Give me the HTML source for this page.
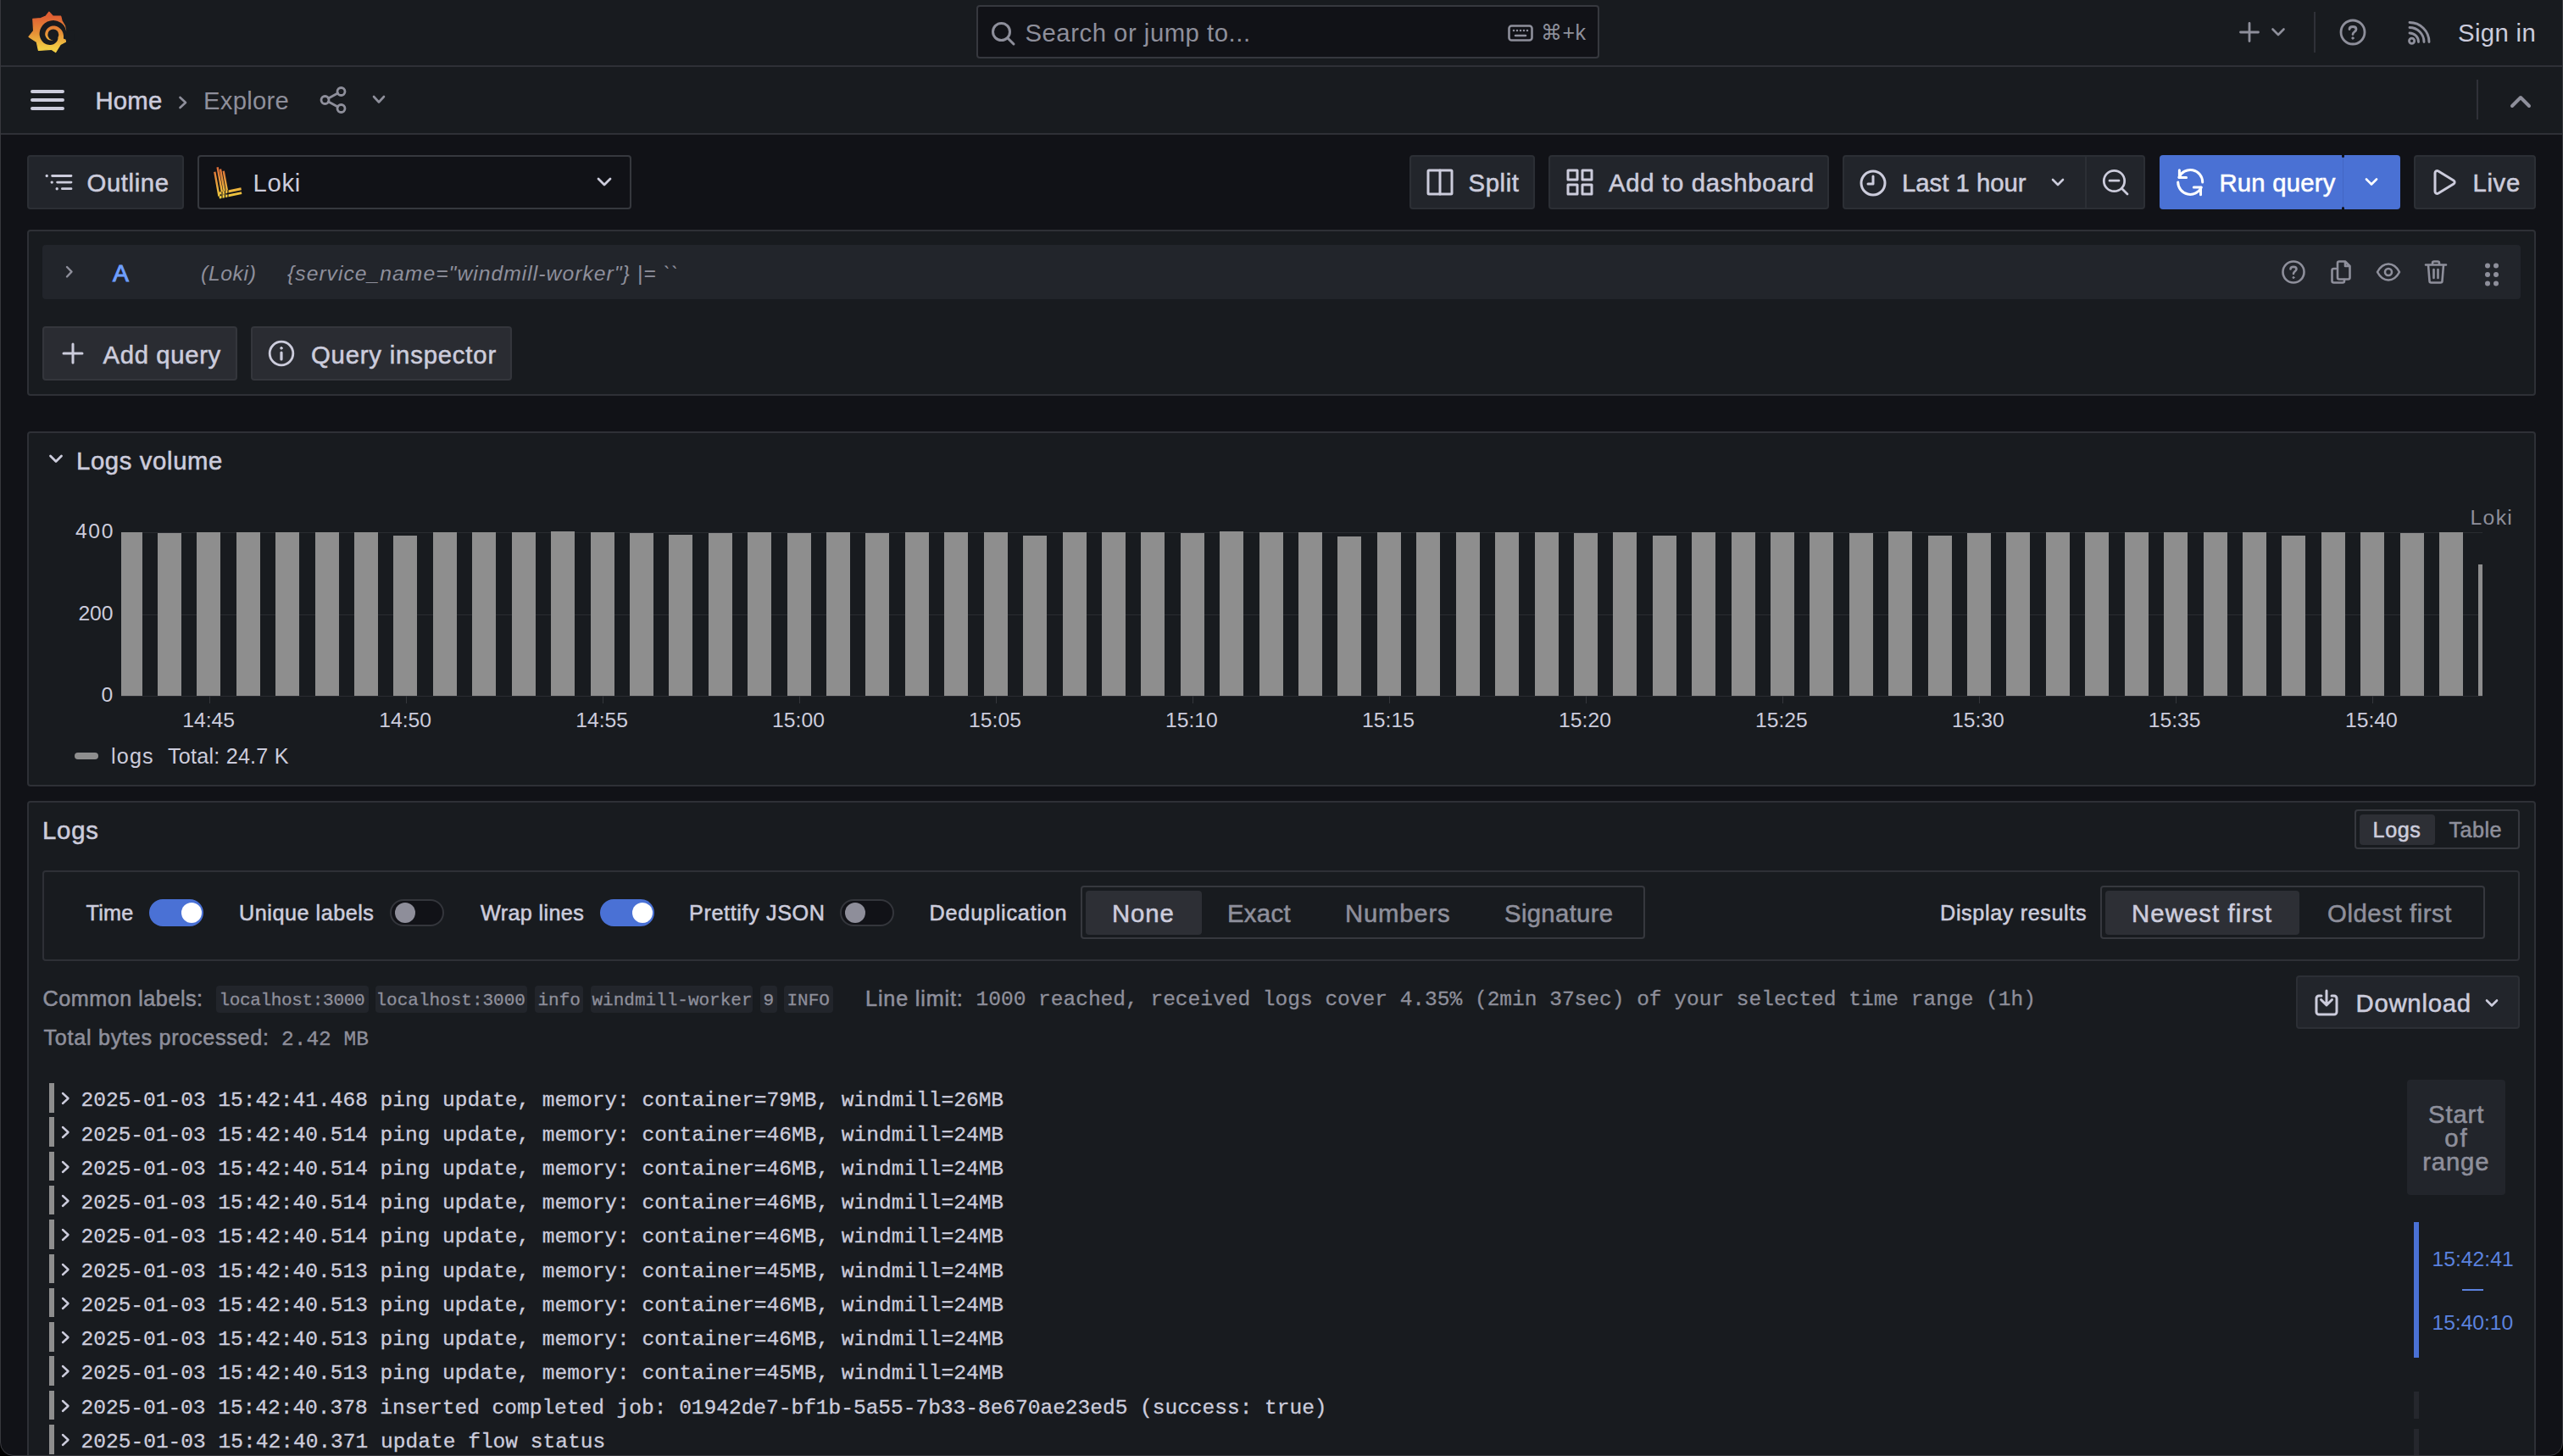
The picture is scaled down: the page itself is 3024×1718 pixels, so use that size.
<!DOCTYPE html>
<html><head><meta charset="utf-8">
<style>
*{box-sizing:border-box}
html,body{margin:0;padding:0}
body{width:3024px;height:1718px;overflow:hidden;background:#111217;position:relative;font-family:"Liberation Sans",sans-serif;color:#ccccdc}
.a{position:absolute}
.t{position:absolute;white-space:nowrap;line-height:1}
.md{-webkit-text-stroke:0.55px currentColor}
.m{font-family:"Liberation Mono",monospace;-webkit-text-stroke:0.3px currentColor}
.sec{color:#8e8f9b}
.bar{position:absolute;left:0;width:3024px;background:#181b1f;border-bottom:2px solid #2e3036}
.btn{position:absolute;background:#22252b;border:2px solid #2c2f35;border-radius:4px}
.ic{position:absolute;overflow:visible}
.ic *{fill:none;stroke-linecap:round;stroke-linejoin:round}
.panel{position:absolute;left:32px;width:2960px;background:#181b1f;border:2px solid #2e3036;border-radius:4px}
@media (max-width:2000px){html{zoom:0.5}}
</style></head><body>
<!-- window borders -->
<div class="a" style="left:0;top:-30px;width:3024px;height:1748px;border:1px solid #37383d;border-radius:16px;box-shadow:0 0 0 60px #000;z-index:50;pointer-events:none"></div>

<!-- ===== TOP BAR ===== -->
<div class="bar" style="top:0;height:79px"></div>
<!--LOGO-->
<svg class="ic" style="left:26px;top:8px" width="60" height="60" viewBox="0 0 60 60">
<defs><linearGradient id="lg" x1="0" y1="0.1" x2="0" y2="0.9"><stop offset="0" stop-color="#df5f33"/><stop offset="0.5" stop-color="#e68d36"/><stop offset="1" stop-color="#f2cd44"/></linearGradient></defs>
<path style="fill:url(#lg);stroke:url(#lg);stroke-width:1.2;stroke-linejoin:round" d="M31.9 6.2 L36.3 10.9 L45.7 11.1 L47 16.5 L50.5 22.5 L51.7 28.8 L50.3 36 L51.5 41.2 L45.3 44.5 L39.6 53.6 L34.6 50.3 L19.4 51.5 L17.3 41.6 L8 35.4 L13.6 28.4 L12.8 14.4 L22.2 13.6 L28 11.1 Z"/>
<path style="fill:#181b1f;stroke:none" d="M49.04 37.84 L52.90 38.76 L56.84 39.41 L60.83 39.79 L61.06 38.95 L61.25 38.10 L61.42 37.24 L61.56 36.38 L61.66 35.51 L61.74 34.64 L61.78 33.77 L61.80 32.90 L61.78 32.03 L61.74 31.16 L61.66 30.29 L61.56 29.42 L61.42 28.56 L61.25 27.70 L56.59 27.96 L51.99 28.54 L51.88 28.00 L51.75 27.46 L51.60 26.92 L51.44 26.38 L51.25 25.85 L51.04 25.33 L50.82 24.81 L50.57 24.29 L50.31 23.79 L50.03 23.29 L49.73 22.80 L49.41 22.32 L49.07 21.85 L48.72 21.39 L48.33 20.96 L47.92 20.55 L47.48 20.17 L47.04 19.79 L46.58 19.44 L46.11 19.10 L45.63 18.77 L45.13 18.47 L44.63 18.18 L44.11 17.90 L43.59 17.65 L43.06 17.41 L42.52 17.20 L41.97 17.00 L41.41 16.82 L40.85 16.66 L40.28 16.52 L39.71 16.40 L39.13 16.30 L38.55 16.22 L37.97 16.16 L37.39 16.12 L36.80 16.10 L36.21 16.11 L35.63 16.15 L35.05 16.21 L34.46 16.28 L33.89 16.38 L33.31 16.49 L32.74 16.63 L32.18 16.78 L31.62 16.96 L31.07 17.15 L30.52 17.37 L29.99 17.60 L29.46 17.85 L28.94 18.12 L28.43 18.41 L27.94 18.71 L27.45 19.03 L26.97 19.37 L26.51 19.73 L26.06 20.10 L25.62 20.48 L25.20 20.89 L24.80 21.31 L24.41 21.75 L24.05 22.20 L23.70 22.67 L23.37 23.14 L23.06 23.63 L22.76 24.13 L22.48 24.63 L22.22 25.15 L21.98 25.67 L21.76 26.20 L21.55 26.74 L21.37 27.28 L21.20 27.83 L21.06 28.39 L20.93 28.94 L20.82 29.50 L20.74 30.07 L20.67 30.63 L20.62 31.20 L20.60 31.77 L20.59 32.33 L20.60 32.90 L20.68 33.46 L20.78 34.02 L20.90 34.57 L21.04 35.12 L21.20 35.65 L21.37 36.18 L21.56 36.70 L21.77 37.21 L22.00 37.71 L22.25 38.20 L22.50 38.68 L22.78 39.14 L23.07 39.60 L23.38 40.04 L23.69 40.47 L24.03 40.88 L24.37 41.28 L24.73 41.67 L25.10 42.04 L25.48 42.40 L25.87 42.74 L26.27 43.07 L26.71 43.35 L27.17 43.59 L27.64 43.81 L28.12 44.01 L28.59 44.19 L29.07 44.36 L29.55 44.50 L30.03 44.62 L30.51 44.72 L30.99 44.81 L31.47 44.87 L31.94 44.92 L32.41 44.95 L32.88 44.96 L33.34 44.95 L33.80 44.93 L34.25 44.89 L34.70 44.83 L35.13 44.75 L35.56 44.66 L35.98 44.56 L36.40 44.44 L36.80 44.30 L37.19 44.13 L37.57 43.94 L37.94 43.74 L38.29 43.53 L38.64 43.31 L38.96 43.08 L39.28 42.84 L39.58 42.58 L39.86 42.32 L40.13 42.06 L40.39 41.78 L40.63 41.50 L40.85 41.21 L41.06 40.92 L41.26 40.62 L41.44 40.32 L41.60 40.02 L41.75 39.71 L41.89 39.41 L42.01 39.10 L42.11 38.80 L42.20 38.50 L42.28 38.19 L42.34 37.89 L42.39 37.59 L42.43 37.30 L42.45 37.00 L42.45 36.71 L42.45 36.43 L42.43 36.15 L36.80 32.90 L37.11 33.09 L37.40 33.30 L37.67 33.53 L37.93 33.79 L38.18 34.06 L38.41 34.35 L38.61 34.65 L38.80 34.97 L38.97 35.31 L39.11 35.66 L39.24 36.02 L39.34 36.39 L39.34 36.67 L39.26 36.84 L39.17 37.01 L39.07 37.17 L38.96 37.34 L38.85 37.50 L38.72 37.66 L38.59 37.81 L38.45 37.97 L38.29 38.11 L38.14 38.26 L37.97 38.39 L37.79 38.53 L37.61 38.65 L37.42 38.78 L37.22 38.89 L37.01 39.00 L36.80 39.10 L36.58 39.19 L36.35 39.27 L36.12 39.34 L35.89 39.41 L35.64 39.47 L35.39 39.51 L35.14 39.55 L34.89 39.58 L34.62 39.60 L34.36 39.60 L34.09 39.60 L33.82 39.59 L33.55 39.56 L33.28 39.53 L33.00 39.48 L32.72 39.42 L32.45 39.36 L32.17 39.28 L31.89 39.18 L31.61 39.08 L31.34 38.96 L31.07 38.84 L30.81 38.69 L30.57 38.51 L30.33 38.33 L30.10 38.13 L29.87 37.93 L29.66 37.72 L29.44 37.50 L29.24 37.27 L29.04 37.03 L28.85 36.78 L28.66 36.52 L28.49 36.26 L28.32 35.99 L28.16 35.71 L28.02 35.42 L27.88 35.12 L27.75 34.82 L27.63 34.52 L27.52 34.20 L27.42 33.89 L27.34 33.56 L27.26 33.23 L27.20 32.90 L27.19 32.56 L27.20 32.23 L27.21 31.89 L27.24 31.56 L27.28 31.22 L27.33 30.89 L27.39 30.55 L27.47 30.22 L27.56 29.90 L27.65 29.57 L27.76 29.25 L27.88 28.93 L28.02 28.62 L28.16 28.31 L28.31 28.00 L28.48 27.70 L28.65 27.40 L28.84 27.12 L29.04 26.83 L29.24 26.56 L29.46 26.29 L29.68 26.03 L29.92 25.77 L30.15 25.52 L30.40 25.27 L30.66 25.04 L30.92 24.81 L31.20 24.59 L31.48 24.38 L31.77 24.18 L32.06 23.99 L32.37 23.81 L32.68 23.64 L33.00 23.48 L33.32 23.34 L33.65 23.20 L33.98 23.07 L34.32 22.96 L34.67 22.86 L35.01 22.77 L35.36 22.69 L35.72 22.62 L36.08 22.57 L36.44 22.53 L36.80 22.50 L37.16 22.49 L37.53 22.49 L37.89 22.50 L38.26 22.53 L38.62 22.57 L38.98 22.62 L39.35 22.69 L39.71 22.77 L40.06 22.86 L40.42 22.96 L40.77 23.08 L41.12 23.20 L41.46 23.34 L41.80 23.50 L42.13 23.66 L42.46 23.84 L42.78 24.03 L43.10 24.23 L43.41 24.44 L43.71 24.66 L44.01 24.89 L44.30 25.14 L44.59 25.38 L44.88 25.62 L45.17 25.88 L45.44 26.15 L45.71 26.42 L45.97 26.71 L46.23 27.01 L46.47 27.32 L46.70 27.64 L46.92 27.96 L47.13 28.30 L47.33 28.65 L47.52 29.00 L47.69 29.36 L47.85 29.73 L48.01 30.11 L48.15 30.49 L48.29 30.87 L48.42 31.27 L48.54 31.67 L48.64 32.07 L48.73 32.48 L48.80 32.90 L48.87 33.32 L48.92 33.75 L48.96 34.18 L48.98 34.61 L48.99 35.05 L48.98 35.49 L48.95 35.93 L48.91 36.37 L48.97 36.86 L49.02 37.35 L49.04 37.84 Z"/>
<circle cx="36.8" cy="32.9" r="6.5" style="fill:#181b1f;stroke:none"/>
</svg>

<!-- search -->
<div class="a" style="left:1152px;top:6px;width:735px;height:63px;background:#111217;border:2px solid #36383e;border-radius:4px"></div>
<svg class="ic" style="left:1168px;top:24px" width="32" height="32" viewBox="0 0 32 32"><circle cx="13.5" cy="13.5" r="10" style="stroke:#8e8f9b;stroke-width:3"/><path d="M21 21 L28 28" style="stroke:#8e8f9b;stroke-width:3"/></svg>
<span class="t sec" style="left:1209.5px;top:24.2px;font-size:29.3px;letter-spacing:0.52px">Search or jump to...</span>
<svg class="ic" style="left:1779px;top:29px" width="30" height="20" viewBox="0 0 30 20"><rect x="1.5" y="1.5" width="27" height="17" rx="3" style="stroke:#8e8f9b;stroke-width:2.6"/><path d="M7 7h0M11 7h0M15 7h0M19 7h0M23 7h0M9 13h12" style="stroke:#8e8f9b;stroke-width:2.6"/></svg>
<span class="t sec" style="left:1817.9px;top:25.9px;font-size:25px;letter-spacing:0.52px">⌘+k</span>

<svg class="ic" style="left:2640px;top:24px" width="28" height="28" viewBox="0 0 28 28"><path d="M14 3.5v21.1M3.5 14h21" style="stroke:#8e8f9b;stroke-width:2.8"/></svg>
<svg class="ic" style="left:2679px;top:32px" width="18" height="12" viewBox="0 0 18 12"><path d="M2.5 2.5 L9 9 L15.5 2.5" style="stroke:#8e8f9b;stroke-width:2.6"/></svg>
<div class="a" style="left:2730px;top:14px;width:2px;height:48px;background:#2f3138"></div>
<svg class="ic" style="left:2759px;top:21px" width="34" height="34" viewBox="0 0 34 34"><circle cx="17" cy="17" r="14" style="stroke:#8e8f9b;stroke-width:2.8"/><path d="M13 13.5 C13 9.5 21 9.5 21 13.5 C21 16.5 17 16.5 17 19.5" style="stroke:#8e8f9b;stroke-width:2.8"/><circle cx="17" cy="24" r="1.2" style="fill:#8e8f9b;stroke:#8e8f9b;stroke-width:1"/></svg>
<svg class="ic" style="left:2833px;top:20px" width="40" height="40" viewBox="0 0 40 40"><circle cx="12.6" cy="28.3" r="3.1" style="stroke:#8e8f9b;stroke-width:2.8"/><path d="M10 19 A10.5 10.5 0 0 1 20.5 29.5 M10 12.5 A17 17 0 0 1 27 29.5 M10 6.5 A23 23 0 0 1 33 29.5" style="stroke:#8e8f9b;stroke-width:2.9"/></svg>
<span class="t" style="left:2900.0px;top:24.2px;font-size:29.3px;letter-spacing:0.35px">Sign in</span>

<!-- ===== SECOND BAR ===== -->
<div class="bar" style="top:79px;height:80px"></div>
<svg class="ic" style="left:34px;top:104px" width="44" height="28" viewBox="0 0 44 28"><path d="M4 4h36M4 14h36M4 24h36" style="stroke:#ccccdc;stroke-width:4"/></svg>
<span class="t md" style="left:112.4px;top:104.0px;font-size:29.3px;letter-spacing:0.23px">Home</span>
<svg class="ic" style="left:209px;top:112px" width="14" height="18" viewBox="0 0 14 18"><path d="M3.5 3 L10 9 L3.5 15" style="stroke:#8e8f9b;stroke-width:2.6"/></svg>
<span class="t sec" style="left:239.9px;top:104.0px;font-size:29.3px;letter-spacing:0.28px">Explore</span>
<svg class="ic" style="left:376px;top:101px" width="34" height="34" viewBox="0 0 34 34"><circle cx="7.5" cy="17" r="4.5" style="stroke:#8e8f9b;stroke-width:2.8"/><circle cx="26.5" cy="7" r="4.5" style="stroke:#8e8f9b;stroke-width:2.8"/><circle cx="26.5" cy="27" r="4.5" style="stroke:#8e8f9b;stroke-width:2.8"/><path d="M11.5 15 L22.5 9 M11.5 19 L22.5 25" style="stroke:#8e8f9b;stroke-width:2.8"/></svg>
<svg class="ic" style="left:438px;top:111px" width="18" height="14" viewBox="0 0 18 14"><path d="M3 3 L9 9.5 L15 3" style="stroke:#8e8f9b;stroke-width:2.6"/></svg>
<div class="a" style="left:2922px;top:94px;width:2px;height:47px;background:#2f3138"></div>
<svg class="ic" style="left:2960px;top:110px" width="28" height="20" viewBox="0 0 28 20"><path d="M4 15 L14 5 L24 15" style="stroke:#8e8f9b;stroke-width:4"/></svg>

<!--TOOLBAR-->
<div class="btn" style="left:32px;top:183px;width:185px;height:64px"></div>
<svg class="ic" style="left:52px;top:203px" width="34" height="24" viewBox="0 0 34 24"><path d="M3.2 4.5h0M9.2 12.1h0M15.2 19.7h0" style="stroke:#ccccdc;stroke-width:3.4"/><path d="M9.6 4.5h22.4M15.6 12.1h16.4M21.4 19.7h10.6" style="stroke:#ccccdc;stroke-width:2.8"/></svg>
<span class="t md" style="left:102.5px;top:201.1px;font-size:29.3px;letter-spacing:0.60px">Outline</span>

<div class="a" style="left:233px;top:183px;width:512px;height:64px;background:#111217;border:2px solid #36383e;border-radius:4px"></div>
<svg class="ic" style="left:250px;top:194px" width="40" height="44" viewBox="0 0 40 44"><defs><linearGradient id="lk" gradientUnits="userSpaceOnUse" x1="0" y1="3" x2="0" y2="40"><stop offset="0" stop-color="#dd6a38"/><stop offset="0.55" stop-color="#e8a23c"/><stop offset="1" stop-color="#f0cf40"/></linearGradient></defs>
<path d="M3.3 8.8 L8.5 37.5 M6.6 3.3 L12.8 37.5 M10.0 5.5 L15.8 37.5 M13.7 7.7 L18.1 32.0 " style="stroke:url(#lk);stroke-width:2.4;stroke-linecap:butt"/>
<path d="M8.2 34.3 L34.6 28.8 M8.7 39 L35.1 33.6" style="stroke:url(#lk);stroke-width:3;stroke-linecap:butt"/>
<path d="M12 32v9M15.5 31v9M19 30v9" style="stroke:#111217;stroke-width:1;stroke-linecap:butt"/></svg>
<span class="t" style="left:298.5px;top:201.0px;font-size:29.3px;letter-spacing:0.65px">Loki</span>
<svg class="ic" style="left:703px;top:208px" width="20" height="14" viewBox="0 0 20 14"><path d="M3 3 L10 10 L17 3" style="stroke:#ccccdc;stroke-width:2.8"/></svg>

<div class="btn" style="left:1663px;top:183px;width:148px;height:64px"></div>
<svg class="ic" style="left:1682px;top:198px" width="34" height="34" viewBox="0 0 34 34"><rect x="3" y="3" width="28" height="28" rx="1" style="stroke:#ccccdc;stroke-width:3"/><path d="M17 3v28" style="stroke:#ccccdc;stroke-width:3"/></svg>
<span class="t md" style="left:1732.5px;top:201.1px;font-size:29.3px;letter-spacing:0.61px">Split</span>

<div class="btn" style="left:1827px;top:183px;width:331px;height:64px"></div>
<svg class="ic" style="left:1847px;top:198px" width="34" height="34" viewBox="0 0 34 34"><rect x="3" y="3" width="11" height="11" style="stroke:#ccccdc;stroke-width:3"/><rect x="20" y="3" width="11" height="11" style="stroke:#ccccdc;stroke-width:3"/><rect x="3" y="20" width="11" height="11" style="stroke:#ccccdc;stroke-width:3"/><rect x="20" y="20" width="11" height="11" style="stroke:#ccccdc;stroke-width:3"/></svg>
<span class="t md" style="left:1898.0px;top:201.1px;font-size:29.3px;letter-spacing:0.71px">Add to dashboard</span>

<div class="btn" style="left:2174px;top:183px;width:357px;height:64px"></div>
<div class="a" style="left:2460px;top:185px;width:2px;height:60px;background:#2c2f35"></div>
<svg class="ic" style="left:2193px;top:199px" width="34" height="34" viewBox="0 0 34 34"><circle cx="17" cy="17" r="14" style="stroke:#ccccdc;stroke-width:3"/><path d="M17 9v9h-6" style="stroke:#ccccdc;stroke-width:3"/></svg>
<span class="t md" style="left:2244.0px;top:201.2px;font-size:29.3px;letter-spacing:0.00px">Last 1 hour</span>
<svg class="ic" style="left:2418px;top:208px" width="20" height="14" viewBox="0 0 20 14"><path d="M4 4 L10 10 L16 4" style="stroke:#ccccdc;stroke-width:2.6"/></svg>
<svg class="ic" style="left:2479px;top:198px" width="36" height="36" viewBox="0 0 36 36"><circle cx="15.5" cy="15.5" r="12.2" style="stroke:#ccccdc;stroke-width:2.8"/><path d="M10 15.2h11M24.5 24.5l6.5 6.5" style="stroke:#ccccdc;stroke-width:2.8"/></svg>

<div class="a" style="left:2548px;top:183px;width:284px;height:64px;background:#4a71d4;border-radius:4px"></div>
<div class="a" style="left:2764px;top:185px;width:1px;height:60px;background:#4266c4"></div><div class="a" style="left:2763px;top:183px;width:3px;height:3px;background:#111217;border-radius:0 0 2px 2px"></div><div class="a" style="left:2763px;top:244px;width:3px;height:3px;background:#111217;border-radius:2px 2px 0 0"></div>
<svg class="ic" style="left:2566px;top:197px" width="36" height="36" viewBox="0 0 36 36"><path d="M4.85 12.33 A14.5 14.5 0 0 1 32.7 18 M3.7 18 A14.5 14.5 0 0 0 31.3 24.1" style="stroke:#ffffff;stroke-width:3"/><path d="M5.4 3.7 V12.5 H13.6 M30.5 32.7 V24 H22.3" style="stroke:#ffffff;stroke-width:3"/></svg>
<span class="t md" style="left:2618.5px;top:200.9px;font-size:29.3px;color:#fff;letter-spacing:0.21px">Run query</span>
<svg class="ic" style="left:2788px;top:207px" width="20" height="15" viewBox="0 0 20 15"><path d="M4 4.5 L10 10.5 L16 4.5" style="stroke:#ffffff;stroke-width:2.6"/></svg>

<div class="btn" style="left:2848px;top:183px;width:144px;height:64px"></div>
<svg class="ic" style="left:2869px;top:199px" width="30" height="32" viewBox="0 0 30 32"><path d="M4 5 C4 3 6 2 8 3 L26 14 C27.5 15 27.5 17 26 18 L8 29 C6 30 4 29 4 27 Z" style="stroke:#ccccdc;stroke-width:3"/></svg>
<span class="t md" style="left:2917.5px;top:201.3px;font-size:29.3px;letter-spacing:0.66px">Live</span>

<!--QUERY-->
<div class="panel" style="top:271px;height:196px"></div>
<div class="a" style="left:50px;top:289px;width:2924px;height:64px;background:#22252b;border-radius:4px"></div>
<svg class="ic" style="left:74px;top:311px" width="14" height="20" viewBox="0 0 14 20"><path d="M5 4 L10.5 9.7 L5 15.5" style="stroke:#8e8f9b;stroke-width:2.4"/></svg>
<span class="t md" style="left:133.0px;top:307.6px;font-size:28.4px;color:#6e9fff;-webkit-text-stroke:1px #6e9fff">A</span>
<span class="t sec" style="left:237.1px;top:310.5px;font-size:24.7px;font-style:italic;letter-spacing:0.61px">(Loki)</span>
<span class="t sec" style="left:339.0px;top:310.5px;font-size:24.7px;font-style:italic;letter-spacing:1.02px">{service_name="windmill-worker"} |= ``</span>
<svg class="ic" style="left:2690px;top:305px" width="32" height="32" viewBox="0 0 32 32"><circle cx="16" cy="16" r="12.5" style="stroke:#8e8f9b;stroke-width:2.6"/><path d="M12.5 12.5 C12.5 9 19.5 9 19.5 12.5 C19.5 15 16 15 16 18" style="stroke:#8e8f9b;stroke-width:2.6"/><circle cx="16" cy="22.5" r="1" style="fill:#8e8f9b;stroke:#8e8f9b;stroke-width:1"/></svg>
<svg class="ic" style="left:2746px;top:305px" width="32" height="32" viewBox="0 0 32 32"><path d="M20 25 v1.5 a2 2 0 0 1 -2 2 H7.5 a2 2 0 0 1 -2 -2 V14 a2 2 0 0 1 2 -2 H10" style="stroke:#8e8f9b;stroke-width:2.6"/><path d="M12 5.5 a2 2 0 0 1 2 -2 h7 l5.5 5.5 v13.5 a2 2 0 0 1 -2 2 H14 a2 2 0 0 1 -2 -2 Z M21 3.5 v5.5 h5.5" style="stroke:#8e8f9b;stroke-width:2.6"/></svg>
<svg class="ic" style="left:2802px;top:305px" width="32" height="32" viewBox="0 0 32 32"><path d="M3 16 C7 8.5 11 6.5 16 6.5 C21 6.5 25 8.5 29 16 C25 23.5 21 25.5 16 25.5 C11 25.5 7 23.5 3 16 Z" style="stroke:#8e8f9b;stroke-width:2.6"/><circle cx="16" cy="16" r="4" style="stroke:#8e8f9b;stroke-width:2.6"/></svg>
<svg class="ic" style="left:2858px;top:305px" width="32" height="32" viewBox="0 0 32 32"><path d="M4 7.5h24M12 7.5V5.5a2 2 0 0 1 2-2h4a2 2 0 0 1 2 2v2M7 7.5 L8.5 26.5 a2 2 0 0 0 2 2h11a2 2 0 0 0 2-2 L25 7.5M13.5 13v10M18.5 13v10" style="stroke:#8e8f9b;stroke-width:2.6"/></svg>
<svg class="ic" style="left:2928px;top:306px" width="24" height="34" viewBox="0 0 24 34"><circle cx="7" cy="7.5" r="3" style="fill:#8e8f9b;stroke:none"/><circle cx="17" cy="7.5" r="3" style="fill:#8e8f9b;stroke:none"/><circle cx="7" cy="18" r="3" style="fill:#8e8f9b;stroke:none"/><circle cx="17" cy="18" r="3" style="fill:#8e8f9b;stroke:none"/><circle cx="7" cy="28.5" r="3" style="fill:#8e8f9b;stroke:none"/><circle cx="17" cy="28.5" r="3" style="fill:#8e8f9b;stroke:none"/></svg>

<div class="btn" style="left:50px;top:385px;width:230px;height:64px;background:#2a2c32;border-color:#34363c"></div>
<svg class="ic" style="left:72px;top:403px" width="28" height="28" viewBox="0 0 28 28"><path d="M14 3v22M3 14h22" style="stroke:#ccccdc;stroke-width:3"/></svg>
<span class="t md" style="left:121.5px;top:403.6px;font-size:29.3px;letter-spacing:0.65px">Add query</span>
<div class="btn" style="left:296px;top:385px;width:308px;height:64px;background:#2a2c32;border-color:#34363c"></div>
<svg class="ic" style="left:316px;top:401px" width="32" height="32" viewBox="0 0 32 32"><circle cx="16" cy="16" r="13.8" style="stroke:#ccccdc;stroke-width:2.8"/><path d="M16 15v8" style="stroke:#ccccdc;stroke-width:3.2"/><circle cx="16" cy="9.8" r="1.3" style="fill:#ccccdc;stroke:#ccccdc;stroke-width:1"/></svg>
<span class="t md" style="left:367.0px;top:403.6px;font-size:29.3px;letter-spacing:0.81px">Query inspector</span>

<!--VOLUME-->
<div class="panel" style="top:509px;height:419px"></div>
<svg class="ic" style="left:56px;top:534px" width="20" height="16" viewBox="0 0 20 16"><path d="M3.5 4 L10 10.5 L16.5 4" style="stroke:#ccccdc;stroke-width:2.8"/></svg>
<span class="t md" style="left:90.0px;top:529.0px;font-size:29.3px;letter-spacing:0.63px">Logs volume</span>
<div class="a" style="left:143px;top:628px;width:2786px;height:1px;background:#2a2c31"></div>
<div class="a" style="left:143px;top:725px;width:2786px;height:1px;background:#2a2c31"></div>
<div class="a" style="left:143px;top:821px;width:2786px;height:1px;background:#2a2c31"></div>
<div class="a" style="left:246.8px;top:821px;width:1px;height:9px;background:#34363b"></div><div class="a" style="left:478.8px;top:821px;width:1px;height:9px;background:#34363b"></div><div class="a" style="left:710.8px;top:821px;width:1px;height:9px;background:#34363b"></div><div class="a" style="left:942.7px;top:821px;width:1px;height:9px;background:#34363b"></div><div class="a" style="left:1174.7px;top:821px;width:1px;height:9px;background:#34363b"></div><div class="a" style="left:1406.7px;top:821px;width:1px;height:9px;background:#34363b"></div><div class="a" style="left:1638.7px;top:821px;width:1px;height:9px;background:#34363b"></div><div class="a" style="left:1870.7px;top:821px;width:1px;height:9px;background:#34363b"></div><div class="a" style="left:2102.6px;top:821px;width:1px;height:9px;background:#34363b"></div><div class="a" style="left:2334.6px;top:821px;width:1px;height:9px;background:#34363b"></div><div class="a" style="left:2566.6px;top:821px;width:1px;height:9px;background:#34363b"></div><div class="a" style="left:2798.6px;top:821px;width:1px;height:9px;background:#34363b"></div>
<div class="a" style="left:143px;top:628px;width:25px;height:193px;background:#8e8e8e"></div>
<div class="a" style="left:186px;top:629px;width:28px;height:192px;background:#8e8e8e"></div>
<div class="a" style="left:232px;top:628px;width:28px;height:193px;background:#8e8e8e"></div>
<div class="a" style="left:279px;top:628px;width:28px;height:193px;background:#8e8e8e"></div>
<div class="a" style="left:325px;top:628px;width:28px;height:193px;background:#8e8e8e"></div>
<div class="a" style="left:372px;top:628px;width:28px;height:193px;background:#8e8e8e"></div>
<div class="a" style="left:418px;top:628px;width:28px;height:193px;background:#8e8e8e"></div>
<div class="a" style="left:464px;top:632px;width:28px;height:189px;background:#8e8e8e"></div>
<div class="a" style="left:511px;top:628px;width:28px;height:193px;background:#8e8e8e"></div>
<div class="a" style="left:557px;top:628px;width:28px;height:193px;background:#8e8e8e"></div>
<div class="a" style="left:604px;top:628px;width:28px;height:193px;background:#8e8e8e"></div>
<div class="a" style="left:650px;top:627px;width:28px;height:194px;background:#8e8e8e"></div>
<div class="a" style="left:697px;top:628px;width:28px;height:193px;background:#8e8e8e"></div>
<div class="a" style="left:743px;top:629px;width:28px;height:192px;background:#8e8e8e"></div>
<div class="a" style="left:789px;top:631px;width:28px;height:190px;background:#8e8e8e"></div>
<div class="a" style="left:836px;top:629px;width:28px;height:192px;background:#8e8e8e"></div>
<div class="a" style="left:882px;top:628px;width:28px;height:193px;background:#8e8e8e"></div>
<div class="a" style="left:929px;top:629px;width:28px;height:192px;background:#8e8e8e"></div>
<div class="a" style="left:975px;top:628px;width:28px;height:193px;background:#8e8e8e"></div>
<div class="a" style="left:1021px;top:629px;width:28px;height:192px;background:#8e8e8e"></div>
<div class="a" style="left:1068px;top:628px;width:28px;height:193px;background:#8e8e8e"></div>
<div class="a" style="left:1114px;top:628px;width:28px;height:193px;background:#8e8e8e"></div>
<div class="a" style="left:1161px;top:628px;width:28px;height:193px;background:#8e8e8e"></div>
<div class="a" style="left:1207px;top:632px;width:28px;height:189px;background:#8e8e8e"></div>
<div class="a" style="left:1254px;top:628px;width:28px;height:193px;background:#8e8e8e"></div>
<div class="a" style="left:1300px;top:628px;width:28px;height:193px;background:#8e8e8e"></div>
<div class="a" style="left:1346px;top:628px;width:28px;height:193px;background:#8e8e8e"></div>
<div class="a" style="left:1393px;top:629px;width:28px;height:192px;background:#8e8e8e"></div>
<div class="a" style="left:1439px;top:627px;width:28px;height:194px;background:#8e8e8e"></div>
<div class="a" style="left:1486px;top:628px;width:28px;height:193px;background:#8e8e8e"></div>
<div class="a" style="left:1532px;top:628px;width:28px;height:193px;background:#8e8e8e"></div>
<div class="a" style="left:1578px;top:633px;width:28px;height:188px;background:#8e8e8e"></div>
<div class="a" style="left:1625px;top:628px;width:28px;height:193px;background:#8e8e8e"></div>
<div class="a" style="left:1671px;top:628px;width:28px;height:193px;background:#8e8e8e"></div>
<div class="a" style="left:1718px;top:628px;width:28px;height:193px;background:#8e8e8e"></div>
<div class="a" style="left:1764px;top:628px;width:28px;height:193px;background:#8e8e8e"></div>
<div class="a" style="left:1811px;top:628px;width:28px;height:193px;background:#8e8e8e"></div>
<div class="a" style="left:1857px;top:629px;width:28px;height:192px;background:#8e8e8e"></div>
<div class="a" style="left:1903px;top:628px;width:28px;height:193px;background:#8e8e8e"></div>
<div class="a" style="left:1950px;top:632px;width:28px;height:189px;background:#8e8e8e"></div>
<div class="a" style="left:1996px;top:628px;width:28px;height:193px;background:#8e8e8e"></div>
<div class="a" style="left:2043px;top:628px;width:28px;height:193px;background:#8e8e8e"></div>
<div class="a" style="left:2089px;top:628px;width:28px;height:193px;background:#8e8e8e"></div>
<div class="a" style="left:2135px;top:628px;width:28px;height:193px;background:#8e8e8e"></div>
<div class="a" style="left:2182px;top:629px;width:28px;height:192px;background:#8e8e8e"></div>
<div class="a" style="left:2228px;top:627px;width:28px;height:194px;background:#8e8e8e"></div>
<div class="a" style="left:2275px;top:632px;width:28px;height:189px;background:#8e8e8e"></div>
<div class="a" style="left:2321px;top:629px;width:28px;height:192px;background:#8e8e8e"></div>
<div class="a" style="left:2367px;top:628px;width:28px;height:193px;background:#8e8e8e"></div>
<div class="a" style="left:2414px;top:628px;width:28px;height:193px;background:#8e8e8e"></div>
<div class="a" style="left:2460px;top:628px;width:28px;height:193px;background:#8e8e8e"></div>
<div class="a" style="left:2507px;top:628px;width:28px;height:193px;background:#8e8e8e"></div>
<div class="a" style="left:2553px;top:628px;width:28px;height:193px;background:#8e8e8e"></div>
<div class="a" style="left:2600px;top:628px;width:28px;height:193px;background:#8e8e8e"></div>
<div class="a" style="left:2646px;top:628px;width:28px;height:193px;background:#8e8e8e"></div>
<div class="a" style="left:2692px;top:632px;width:28px;height:189px;background:#8e8e8e"></div>
<div class="a" style="left:2739px;top:628px;width:28px;height:193px;background:#8e8e8e"></div>
<div class="a" style="left:2785px;top:628px;width:28px;height:193px;background:#8e8e8e"></div>
<div class="a" style="left:2832px;top:629px;width:28px;height:192px;background:#8e8e8e"></div>
<div class="a" style="left:2878px;top:628px;width:28px;height:193px;background:#8e8e8e"></div>
<div class="a" style="left:2924px;top:666px;width:5px;height:155px;background:#8e8e8e"></div>
<span class="t" style="left:88.9px;top:614.9px;font-size:24.7px;letter-spacing:1.75px">400</span>
<span class="t" style="left:92.4px;top:711.9px;font-size:24.7px">200</span>
<span class="t" style="left:119.4px;top:807.8px;font-size:24.7px">0</span>
<span class="t lx" style="left:215.2px;top:838.2px;font-size:24.7px">14:45</span>
<span class="t lx" style="left:447.2px;top:838.2px;font-size:24.7px">14:50</span>
<span class="t lx" style="left:679.2px;top:838.2px;font-size:24.7px">14:55</span>
<span class="t lx" style="left:911.1px;top:838.2px;font-size:24.7px">15:00</span>
<span class="t lx" style="left:1143.1px;top:838.2px;font-size:24.7px">15:05</span>
<span class="t lx" style="left:1375.0px;top:838.2px;font-size:24.7px">15:10</span>
<span class="t lx" style="left:1607.1px;top:838.2px;font-size:24.7px">15:15</span>
<span class="t lx" style="left:1839.1px;top:838.2px;font-size:24.7px">15:20</span>
<span class="t lx" style="left:2071.0px;top:838.2px;font-size:24.7px">15:25</span>
<span class="t lx" style="left:2303.0px;top:838.2px;font-size:24.7px">15:30</span>
<span class="t lx" style="left:2534.7px;top:838.2px;font-size:24.7px">15:35</span>
<span class="t lx" style="left:2767.0px;top:838.2px;font-size:24.7px">15:40</span>

<span class="t sec" style="left:2914.5px;top:599.0px;font-size:24.7px;letter-spacing:1.34px">Loki</span>
<div class="a" style="left:88px;top:888px;width:28px;height:8px;border-radius:4px;background:#8e8e8e"></div>
<span class="t" style="left:131.0px;top:880.0px;font-size:25.2px;letter-spacing:1.14px">logs</span>
<span class="t" style="left:198.0px;top:880.0px;font-size:25.2px;letter-spacing:0.21px">Total: 24.7 K</span>

<!--LOGS-->
<div class="panel" style="top:945px;height:820px"></div>
<span class="t md" style="left:50.0px;top:965.4px;font-size:29.3px;letter-spacing:0.78px">Logs</span>
<div class="a" style="left:2778px;top:955px;width:195px;height:47px;border:2px solid #36383e;border-radius:4px"></div>
<div class="a" style="left:2784px;top:961px;width:89px;height:36px;border-radius:4px;background:#2d2f35"></div>
<span class="t md" style="left:2799.6px;top:967.1px;font-size:25.2px;letter-spacing:0.55px">Logs</span>
<span class="t sec md" style="left:2889.5px;top:967.1px;font-size:25.2px;letter-spacing:0.48px">Table</span>

<div class="a" style="left:50px;top:1027px;width:2923px;height:107px;border:2px solid #2e3036;border-radius:4px"></div>
<span class="t md" style="left:101.5px;top:1065.0px;font-size:25.2px;letter-spacing:0.24px">Time</span>
<div class="a" style="left:176px;top:1061px;width:64px;height:32px;border-radius:16px;background:#4a71d5"></div><div class="a" style="left:214px;top:1065px;width:24px;height:24px;border-radius:12px;background:#fff"></div>
<span class="t md" style="left:282.1px;top:1065.0px;font-size:25.2px;letter-spacing:0.52px">Unique labels</span>
<div class="a" style="left:460px;top:1061px;width:64px;height:32px;border-radius:16px;background:#111217;border:2px solid #34363c"></div><div class="a" style="left:466px;top:1065px;width:24px;height:24px;border-radius:12px;background:#8e8e9a"></div>
<span class="t md" style="left:567.0px;top:1065.0px;font-size:25.2px;letter-spacing:0.36px">Wrap lines</span>
<div class="a" style="left:708px;top:1061px;width:64px;height:32px;border-radius:16px;background:#4a71d5"></div><div class="a" style="left:746px;top:1065px;width:24px;height:24px;border-radius:12px;background:#fff"></div>
<span class="t md" style="left:813.1px;top:1065.0px;font-size:25.2px;letter-spacing:0.61px">Prettify JSON</span>
<div class="a" style="left:991px;top:1061px;width:64px;height:32px;border-radius:16px;background:#111217;border:2px solid #34363c"></div><div class="a" style="left:997px;top:1065px;width:24px;height:24px;border-radius:12px;background:#8e8e9a"></div>
<span class="t md" style="left:1096.6px;top:1065.4px;font-size:25.2px;letter-spacing:0.78px">Deduplication</span>
<div class="a" style="left:1275px;top:1045px;width:666px;height:63px;border:2px solid #36383e;border-radius:4px"></div>
<div class="a" style="left:1281px;top:1051px;width:137px;height:52px;border-radius:4px;background:#2d2f35"></div>
<span class="t md" style="left:1312.0px;top:1062.5px;font-size:29.3px;letter-spacing:0.94px">None</span>
<span class="t sec md" style="left:1448.0px;top:1062.5px;font-size:29.3px;letter-spacing:0.32px">Exact</span>
<span class="t sec md" style="left:1587.0px;top:1062.5px;font-size:29.3px;letter-spacing:0.80px">Numbers</span>
<span class="t sec md" style="left:1775.0px;top:1062.5px;font-size:29.3px;letter-spacing:0.34px">Signature</span>
<span class="t md" style="left:2289.1px;top:1065.4px;font-size:25.2px;letter-spacing:0.62px">Display results</span>
<div class="a" style="left:2478px;top:1045px;width:454px;height:63px;border:2px solid #36383e;border-radius:4px"></div>
<div class="a" style="left:2484px;top:1051px;width:229px;height:52px;border-radius:4px;background:#2d2f35"></div>
<span class="t md" style="left:2515.0px;top:1062.7px;font-size:29.3px;letter-spacing:1.10px">Newest first</span>
<span class="t sec md" style="left:2746.0px;top:1062.7px;font-size:29.3px;letter-spacing:0.59px">Oldest first</span>

<span class="t sec md" style="left:50.5px;top:1166.3px;font-size:25.2px;letter-spacing:0.51px">Common labels:</span>
<div class="a" style="left:255px;top:1163px;width:180px;height:32px;border-radius:4px;background:#22252b"></div><span class="t m sec" style="left:258.5px;top:1169.7px;font-size:21px;letter-spacing:-0.34px">localhost:3000</span>
<div class="a" style="left:443px;top:1163px;width:179px;height:32px;border-radius:4px;background:#22252b"></div><span class="t m sec" style="left:443.5px;top:1169.7px;font-size:21px">localhost:3000</span>
<div class="a" style="left:631px;top:1163px;width:57px;height:32px;border-radius:4px;background:#22252b"></div><span class="t m sec" style="left:634.5px;top:1169.7px;font-size:21px">info</span>
<div class="a" style="left:697px;top:1163px;width:191px;height:32px;border-radius:4px;background:#22252b"></div><span class="t m sec" style="left:698.5px;top:1169.7px;font-size:21px">windmill-worker</span>
<div class="a" style="left:897px;top:1163px;width:20px;height:32px;border-radius:4px;background:#22252b"></div><span class="t m sec" style="left:900.5px;top:1169.7px;font-size:21px">9</span>
<div class="a" style="left:925px;top:1163px;width:58px;height:32px;border-radius:4px;background:#22252b"></div><span class="t m sec" style="left:928.5px;top:1169.7px;font-size:21px">INFO</span>

<span class="t sec md" style="left:1021.1px;top:1166.3px;font-size:25.2px;letter-spacing:0.83px">Line limit:</span>
<span class="t m sec" style="left:1151.5px;top:1168.0px;font-size:24.55px;letter-spacing:-0.02px">1000 reached, received logs cover 4.35% (2min 37sec) of your selected time range (1h)</span>
<span class="t sec md" style="left:51.5px;top:1211.5px;font-size:25.2px;letter-spacing:0.71px">Total bytes processed:</span>
<span class="t m sec" style="left:332.0px;top:1214.5px;font-size:24.55px;letter-spacing:-0.04px">2.42 MB</span>

<div class="btn" style="left:2709px;top:1151px;width:264px;height:63px"></div>
<svg class="ic" style="left:2729px;top:1166px" width="32" height="34" viewBox="0 0 32 34"><path d="M16 3v17M9.5 13.5 L16 20 L22.5 13.5M10 9H7a3 3 0 0 0-3 3v16a3 3 0 0 0 3 3h18a3 3 0 0 0 3-3V12a3 3 0 0 0-3-3h-3" style="stroke:#ccccdc;stroke-width:3"/></svg>
<span class="t md" style="left:2779.5px;top:1169.1px;font-size:29.3px;letter-spacing:0.75px">Download</span>
<svg class="ic" style="left:2931px;top:1177px" width="18" height="14" viewBox="0 0 18 14"><path d="M3 3.5 L9 9.5 L15 3.5" style="stroke:#ccccdc;stroke-width:2.6"/></svg>

<div class="a" style="left:58px;top:1278.0px;width:6px;height:34.5px;background:#8e8e8e"></div><svg class="ic" style="left:71px;top:1287.0px" width="14" height="18" viewBox="0 0 14 18"><path d="M3 3 L9.5 9 L3 15" style="stroke:#ccccdc;stroke-width:2.4"/></svg><span class="t m" style="left:95.5px;top:1287.2px;font-size:24.55px;letter-spacing:-0.02px">2025-01-03 15:42:41.468 ping update, memory: container=79MB, windmill=26MB</span>
<div class="a" style="left:58px;top:1318.3px;width:6px;height:34.5px;background:#8e8e8e"></div><svg class="ic" style="left:71px;top:1327.3px" width="14" height="18" viewBox="0 0 14 18"><path d="M3 3 L9.5 9 L3 15" style="stroke:#ccccdc;stroke-width:2.4"/></svg><span class="t m" style="left:95.5px;top:1327.5px;font-size:24.55px;letter-spacing:-0.02px">2025-01-03 15:42:40.514 ping update, memory: container=46MB, windmill=24MB</span>
<div class="a" style="left:58px;top:1358.6px;width:6px;height:34.5px;background:#8e8e8e"></div><svg class="ic" style="left:71px;top:1367.6px" width="14" height="18" viewBox="0 0 14 18"><path d="M3 3 L9.5 9 L3 15" style="stroke:#ccccdc;stroke-width:2.4"/></svg><span class="t m" style="left:95.5px;top:1367.8px;font-size:24.55px;letter-spacing:-0.02px">2025-01-03 15:42:40.514 ping update, memory: container=46MB, windmill=24MB</span>
<div class="a" style="left:58px;top:1398.9px;width:6px;height:34.5px;background:#8e8e8e"></div><svg class="ic" style="left:71px;top:1407.9px" width="14" height="18" viewBox="0 0 14 18"><path d="M3 3 L9.5 9 L3 15" style="stroke:#ccccdc;stroke-width:2.4"/></svg><span class="t m" style="left:95.5px;top:1408.0px;font-size:24.55px;letter-spacing:-0.02px">2025-01-03 15:42:40.514 ping update, memory: container=46MB, windmill=24MB</span>
<div class="a" style="left:58px;top:1439.2px;width:6px;height:34.5px;background:#8e8e8e"></div><svg class="ic" style="left:71px;top:1448.2px" width="14" height="18" viewBox="0 0 14 18"><path d="M3 3 L9.5 9 L3 15" style="stroke:#ccccdc;stroke-width:2.4"/></svg><span class="t m" style="left:95.5px;top:1448.3px;font-size:24.55px;letter-spacing:-0.02px">2025-01-03 15:42:40.514 ping update, memory: container=46MB, windmill=24MB</span>
<div class="a" style="left:58px;top:1479.5px;width:6px;height:34.5px;background:#8e8e8e"></div><svg class="ic" style="left:71px;top:1488.5px" width="14" height="18" viewBox="0 0 14 18"><path d="M3 3 L9.5 9 L3 15" style="stroke:#ccccdc;stroke-width:2.4"/></svg><span class="t m" style="left:95.5px;top:1488.6px;font-size:24.55px;letter-spacing:-0.02px">2025-01-03 15:42:40.513 ping update, memory: container=45MB, windmill=24MB</span>
<div class="a" style="left:58px;top:1519.8px;width:6px;height:34.5px;background:#8e8e8e"></div><svg class="ic" style="left:71px;top:1528.8px" width="14" height="18" viewBox="0 0 14 18"><path d="M3 3 L9.5 9 L3 15" style="stroke:#ccccdc;stroke-width:2.4"/></svg><span class="t m" style="left:95.5px;top:1528.9px;font-size:24.55px;letter-spacing:-0.02px">2025-01-03 15:42:40.513 ping update, memory: container=46MB, windmill=24MB</span>
<div class="a" style="left:58px;top:1560.1px;width:6px;height:34.5px;background:#8e8e8e"></div><svg class="ic" style="left:71px;top:1569.1px" width="14" height="18" viewBox="0 0 14 18"><path d="M3 3 L9.5 9 L3 15" style="stroke:#ccccdc;stroke-width:2.4"/></svg><span class="t m" style="left:95.5px;top:1569.2px;font-size:24.55px;letter-spacing:-0.02px">2025-01-03 15:42:40.513 ping update, memory: container=46MB, windmill=24MB</span>
<div class="a" style="left:58px;top:1600.4px;width:6px;height:34.5px;background:#8e8e8e"></div><svg class="ic" style="left:71px;top:1609.4px" width="14" height="18" viewBox="0 0 14 18"><path d="M3 3 L9.5 9 L3 15" style="stroke:#ccccdc;stroke-width:2.4"/></svg><span class="t m" style="left:95.5px;top:1609.4px;font-size:24.55px;letter-spacing:-0.02px">2025-01-03 15:42:40.513 ping update, memory: container=45MB, windmill=24MB</span>
<div class="a" style="left:58px;top:1640.7px;width:6px;height:34.5px;background:#8e8e8e"></div><svg class="ic" style="left:71px;top:1649.7px" width="14" height="18" viewBox="0 0 14 18"><path d="M3 3 L9.5 9 L3 15" style="stroke:#ccccdc;stroke-width:2.4"/></svg><span class="t m" style="left:95.5px;top:1649.7px;font-size:24.55px;letter-spacing:-0.03px">2025-01-03 15:42:40.378 inserted completed job: 01942de7-bf1b-5a55-7b33-8e670ae23ed5 (success: true)</span>
<div class="a" style="left:58px;top:1681.0px;width:6px;height:34.5px;background:#8e8e8e"></div><svg class="ic" style="left:71px;top:1690.0px" width="14" height="18" viewBox="0 0 14 18"><path d="M3 3 L9.5 9 L3 15" style="stroke:#ccccdc;stroke-width:2.4"/></svg><span class="t m" style="left:95.5px;top:1690.0px;font-size:24.55px">2025-01-03 15:42:40.371 update flow status</span>

<div class="a" style="left:2840px;top:1274px;width:116px;height:136px;border-radius:4px;background:#22252b"></div>
<span class="t sec md" style="left:2865.1px;top:1300.0px;font-size:29.3px;letter-spacing:0.85px">Start</span>
<span class="t sec md" style="left:2884.2px;top:1327.8px;font-size:29.3px;letter-spacing:2px">of</span>
<span class="t sec md" style="left:2858.3px;top:1355.8px;font-size:29.3px;letter-spacing:0.82px">range</span>
<div class="a" style="left:2848px;top:1442px;width:6px;height:160px;background:#4a71d5"></div>
<span class="t" style="left:2869.5px;top:1474.4px;font-size:24.7px;color:#5b82de;letter-spacing:0.01px">15:42:41</span>
<div class="a" style="left:2905px;top:1521px;width:25px;height:2px;background:#5b82de"></div>
<span class="t" style="left:2869.5px;top:1549.0px;font-size:24.7px;color:#5b82de;letter-spacing:-0.06px">15:40:10</span>
<div class="a" style="left:2848px;top:1642px;width:6px;height:32px;background:#25272d"></div>
<div class="a" style="left:2848px;top:1686px;width:6px;height:40px;background:#25272d"></div>
</body></html>
